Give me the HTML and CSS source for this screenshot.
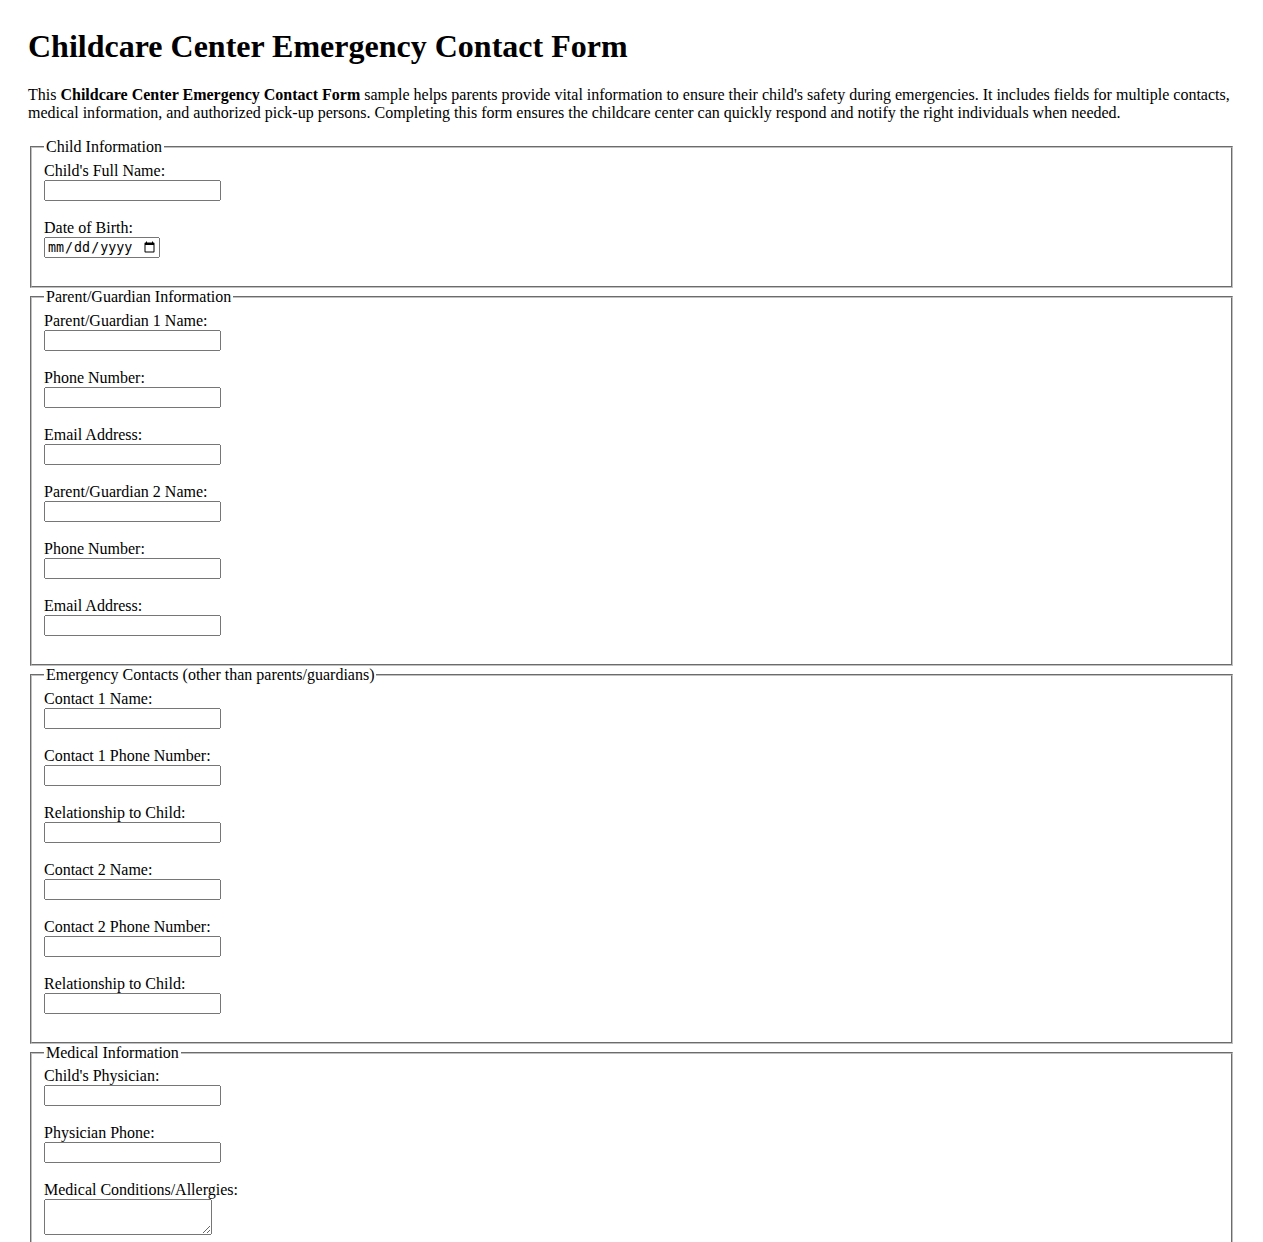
FILE: index.html
```html
<!DOCTYPE html>
<html lang="en">
<head>
<meta charset="utf-8">
<title>Childcare Center Emergency Contact Form</title>
<link rel="stylesheet" href="styles.css">
</head>
<body>
<div class="page">
<h1 class="title">Childcare Center Emergency Contact Form</h1>
<p class="intro">This <strong>Childcare Center Emergency Contact Form</strong> sample helps parents provide vital information to ensure their child's safety during emergencies. It includes fields for multiple contacts, medical information, and authorized pick-up persons. Completing this form ensures the childcare center can quickly respond and notify the right individuals when needed.</p>
<form>
<fieldset class="group">
<legend>Child Information</legend>
<label for="childName">Child's Full Name:</label><br>
<input class="field" type="text" id="childName"><br><br>
<label for="dob">Date of Birth:</label><br>
<input class="date-field" type="date" id="dob"><br><br>
</fieldset>
<fieldset class="group">
<legend>Parent/Guardian Information</legend>
<label for="p1">Parent/Guardian 1 Name:</label><br>
<input class="field" type="text" id="p1"><br><br>
<label for="p1phone">Phone Number:</label><br>
<input class="field" type="tel" id="p1phone"><br><br>
<label for="p1email">Email Address:</label><br>
<input class="field" type="email" id="p1email"><br><br>
<label for="p2">Parent/Guardian 2 Name:</label><br>
<input class="field" type="text" id="p2"><br><br>
<label for="p2phone">Phone Number:</label><br>
<input class="field" type="tel" id="p2phone"><br><br>
<label for="p2email">Email Address:</label><br>
<input class="field" type="email" id="p2email"><br><br>
</fieldset>
<fieldset class="group">
<legend>Emergency Contacts (other than parents/guardians)</legend>
<label for="c1">Contact 1 Name:</label><br>
<input class="field" type="text" id="c1"><br><br>
<label for="c1phone">Contact 1 Phone Number:</label><br>
<input class="field" type="tel" id="c1phone"><br><br>
<label for="c1rel">Relationship to Child:</label><br>
<input class="field" type="text" id="c1rel"><br><br>
<label for="c2">Contact 2 Name:</label><br>
<input class="field" type="text" id="c2"><br><br>
<label for="c2phone">Contact 2 Phone Number:</label><br>
<input class="field" type="tel" id="c2phone"><br><br>
<label for="c2rel">Relationship to Child:</label><br>
<input class="field" type="text" id="c2rel"><br><br>
</fieldset>
<fieldset class="group">
<legend>Medical Information</legend>
<label for="phys">Child's Physician:</label><br>
<input class="field" type="text" id="phys"><br><br>
<label for="physphone">Physician Phone:</label><br>
<input class="field" type="tel" id="physphone"><br><br>
<label for="cond">Medical Conditions/Allergies:</label><br>
<textarea class="area" id="cond"></textarea><br><br>
</fieldset>
<fieldset class="group">
<legend>Authorized Pick-Up Persons</legend>
<label for="pick1">Authorized Person 1:</label><br>
<input class="field" type="text" id="pick1"><br><br>
<label for="pick2">Authorized Person 2:</label><br>
<input class="field" type="text" id="pick2"><br><br>
</fieldset>
<br>
<input class="submit" type="submit" value="Submit">
</form>
</div>
</body>
</html>
```
FILE: styles.css
```css
body {
  margin: 8px;
  font-family: "Liberation Serif", "Times New Roman", serif;
  font-size: 16px;
  color: #000;
  background: #fff;
}

.page {
  padding: 20px;
}

.title {
  margin-top: 0;
  font-size: 2em;
}

.intro {
  margin: 0 0 16px;
}

.group {
  border: 2px groove #c0c0c0;
}

.field {
  box-sizing: border-box;
  width: 177px;
}

.date-field {
  box-sizing: border-box;
  width: 116px;
}

.area {
  box-sizing: border-box;
  width: 168px;
  height: 36px;
}
```
